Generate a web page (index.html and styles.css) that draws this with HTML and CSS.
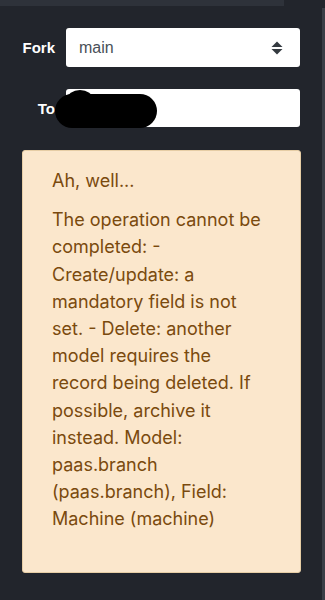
FILE: index.html
```html
<!DOCTYPE html>
<html lang="en">
<head>
    <meta charset="UTF-8">
    <meta name="viewport" content="width=device-width, initial-scale=1.0">
    <title>Fork branch</title>
    <link rel="stylesheet" href="styles.css">
</head>
<body>
    <div class="page">
        <div class="content">
            <div class="top-strip"></div>
            <form class="fork-form">
                <div class="form-row">
                    <label for="fork">Fork</label>
                    <div class="select-box" id="fork">
                        <span>main</span>
                        <svg class="select-arrows" width="12" height="14" viewBox="0 0 12 14">
                            <path d="M6 0.5 L11.5 6 H0.5 Z" fill="#343a40"/>
                            <path d="M6 13.5 L11.5 8 H0.5 Z" fill="#343a40"/>
                        </svg>
                    </div>
                </div>
                <div class="form-row">
                    <label for="to">To</label>
                    <div class="text-box" id="to">
                        <span class="redacted"></span>
                        <span class="redacted-bump"></span>
                    </div>
                </div>
            </form>
            <div class="alert-box">
                <p class="alert-title">Ah, well...</p>
                <p class="alert-text">The operation cannot be completed: - Create/update: a mandatory field is not set. - Delete: another model requires the record being deleted. If possible, archive it instead. Model: paas.branch (paas.branch), Field: Machine (machine)</p>
            </div>
        </div>
        <div class="scroll-track"></div>
    </div>
</body>
</html>
```

FILE: styles.css
```css
* {
    margin: 0;
    padding: 0;
    box-sizing: border-box;
}

body {
    background: #22252c;
    font-family: Inter, "Noto Sans", sans-serif;
    width: 325px;
    height: 600px;
    overflow: hidden;
}

.page {
    display: flex;
    height: 600px;
}

.content {
    width: 322px;
}

.top-strip {
    width: 284px;
    height: 6px;
    background: #2e323a;
}

.scroll-track {
    width: 3px;
    margin-top: 8px;
    background: #3a3e46;
}

.fork-form {
    padding: 22px 0 0 22px;
    display: flex;
    flex-direction: column;
    gap: 22px;
}

.form-row {
    display: flex;
    align-items: center;
    gap: 11px;
}

.form-row label {
    width: 33px;
    text-align: right;
    color: #ffffff;
    font-family: "Liberation Sans", Arial, sans-serif;
    font-weight: bold;
    font-size: 15px;
}

.select-box,
.text-box {
    position: relative;
    width: 234px;
    height: 39px;
    background: #ffffff;
    border-radius: 3px;
    display: flex;
    align-items: center;
    justify-content: space-between;
    padding: 0 17px 0 13px;
    color: #495057;
    font-family: "Liberation Sans", Arial, sans-serif;
    font-size: 16px;
}

.text-box {
    height: 38px;
}

.redacted {
    position: absolute;
    left: -11px;
    top: 5px;
    width: 102px;
    height: 34px;
    background: #000000;
    border-radius: 17px;
}

.redacted-bump {
    position: absolute;
    left: 1px;
    top: 1px;
    width: 26px;
    height: 18px;
    background: #000000;
    border-radius: 50%;
}

.alert-box {
    margin: 23px 0 0 22px;
    width: 279px;
    height: 423px;
    background: #fbe7cc;
    border: 1px solid #e6cda5;
    border-radius: 3px;
    padding: 16px 29px 0 29px;
    color: #7a4a0e;
    font-size: 18px;
    line-height: 27.2px;
}

.alert-title {
    margin-bottom: 12px;
}
```
